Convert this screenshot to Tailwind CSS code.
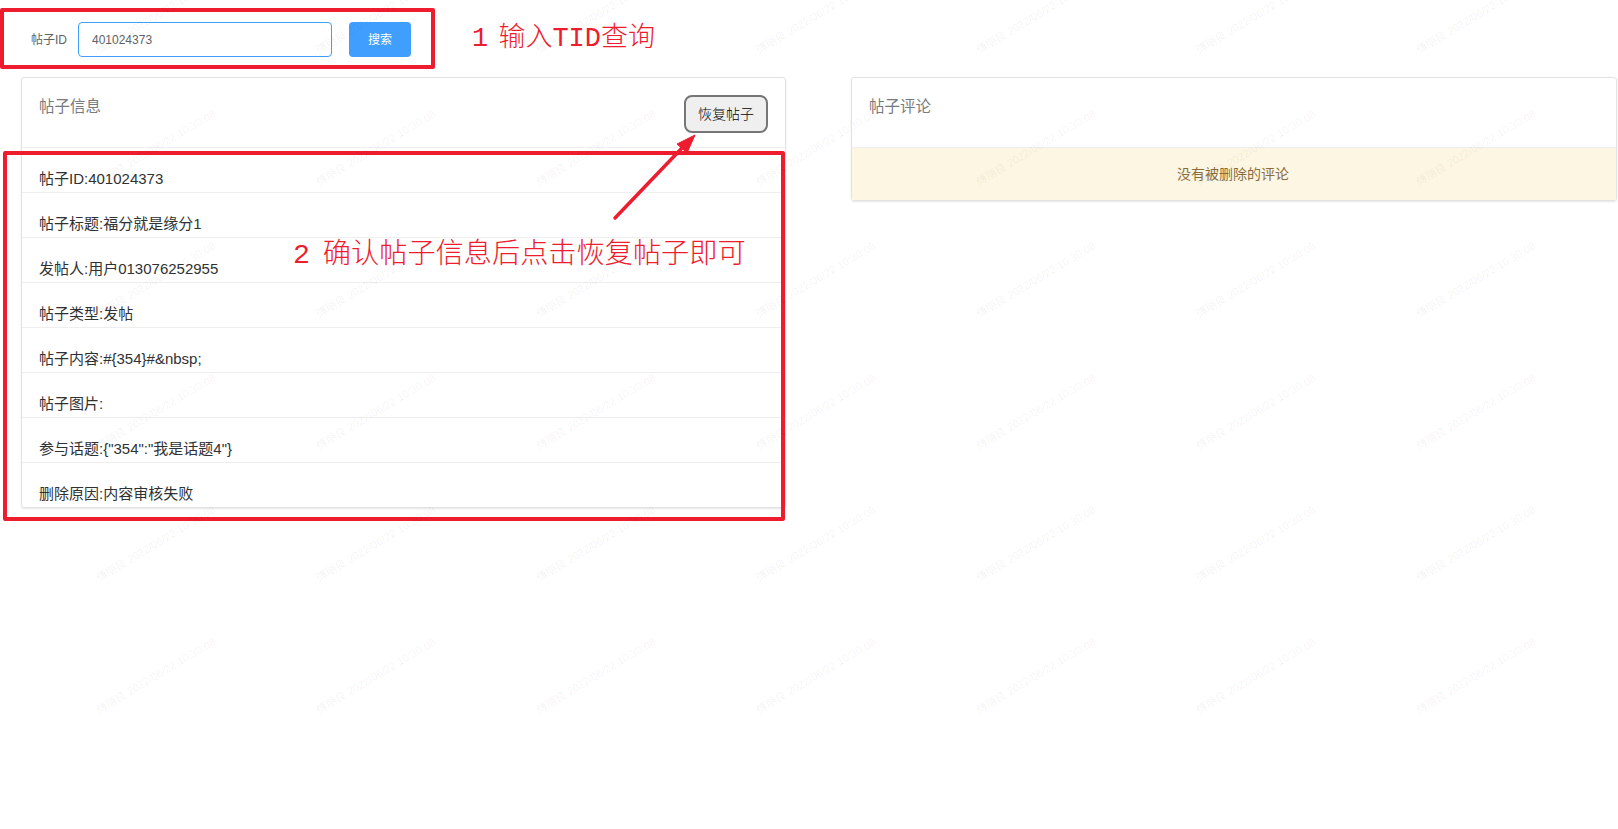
<!DOCTYPE html>
<html lang="zh-CN">
<head>
<meta charset="utf-8"/>
<title>帖子恢复</title>
<script src="https://cdn.jsdelivr.net/npm/@tailwindcss/browser@4"></script>
</head>
<body class="bg-white font-['Liberation_Sans','Noto_Sans_CJK_SC',sans-serif]">
<div class="relative h-[829px] overflow-hidden">
  <!-- top bar shadow -->
  <div class="h-0 shadow-[0_0_7px_rgba(0,0,0,0.3)]"></div>
  <div class="absolute top-0 left-[1330px] right-0 h-0 shadow-[0_1px_8px_rgba(0,0,0,0.55)]"></div>

  <!-- search form -->
  <div class="flex items-center pt-[22px] pl-[31px] h-[57px]">
    <label class="w-[47px] text-xs text-[#606266]">帖子ID</label>
    <input class="w-[254px] h-[35px] px-[13px] text-xs text-[#606266] border border-[#409eff] rounded outline-none" value="401024373"/>
    <button class="ml-[17px] w-[62px] h-[35px] bg-[#409eff] text-white text-xs rounded">搜索</button>
  </div>

  <div class="flex gap-[65px] pl-[21px] pr-px mt-[20px] items-start">
    <!-- post info -->
    <div class="w-[765px] border border-[#e3e3e3] rounded-[3px] shadow-[0_1px_2px_rgba(0,0,0,0.1)]">
      <div class="h-[70px] flex justify-between pl-[17px] pr-[17px] border-b border-[#eeeeee]">
        <div class="pt-[18px] text-[15.5px] leading-[22px] text-[#777b80]">帖子信息</div>
        <button class="mt-[17px] w-[84px] h-[38px] bg-[#efefef] border-2 border-[#767676] rounded-lg text-sm font-light text-black">恢复帖子</button>
      </div>
      <div class="h-[45px] pt-[21px] pl-[17px] text-[15px] leading-5 text-[#303133] border-b border-[#eeeeee]">帖子ID:401024373</div>
      <div class="h-[45px] pt-[21px] pl-[17px] text-[15px] leading-5 text-[#303133] border-b border-[#eeeeee]">帖子标题:福分就是缘分1</div>
      <div class="h-[45px] pt-[21px] pl-[17px] text-[15px] leading-5 text-[#303133] border-b border-[#eeeeee]">发帖人:用户013076252955</div>
      <div class="h-[45px] pt-[21px] pl-[17px] text-[15px] leading-5 text-[#303133] border-b border-[#eeeeee]">帖子类型:发帖</div>
      <div class="h-[45px] pt-[21px] pl-[17px] text-[15px] leading-5 text-[#303133] border-b border-[#eeeeee]">帖子内容:#{354}#&amp;nbsp;</div>
      <div class="h-[45px] pt-[21px] pl-[17px] text-[15px] leading-5 text-[#303133] border-b border-[#eeeeee]">帖子图片:</div>
      <div class="h-[45px] pt-[21px] pl-[17px] text-[15px] leading-5 text-[#303133] border-b border-[#eeeeee]">参与话题:{"354":"我是话题4"}</div>
      <div class="h-[44px] pt-[21px] pl-[17px] text-[15px] leading-5 text-[#303133]">删除原因:内容审核失败</div>
    </div>

    <!-- post comments -->
    <div class="flex-1 border border-[#e3e3e3] rounded-[3px] shadow-[0_1px_2px_rgba(0,0,0,0.1)]">
      <div class="h-[70px] pl-[17px] pt-[18px] text-[15.5px] leading-[22px] text-[#777b80] border-b border-[#eeeeee]">帖子评论</div>
      <div class="h-[52px] pr-[2px] pt-[16px] bg-[#fcf6e3] text-center text-sm leading-5 text-[#8a6d3b]">没有被删除的评论</div>
    </div>
  </div>

  <!-- red annotations -->
  <div class="absolute left-0 top-[8px] w-[435px] h-[61px] border-4 border-[#ed1c2e] rounded-[2px]"></div>
  <div class="absolute left-[3px] top-[151px] w-[782px] h-[370px] border-4 border-[#ed1c2e] rounded-[2px]"></div>
  <div class="absolute left-[472px] top-[20px] text-[27px] leading-[38px] [word-spacing:-6px] font-light whitespace-nowrap text-[#ed1c2e] font-['Liberation_Mono','Noto_Sans_CJK_SC',monospace]">1 输入TID查询</div>
  <div class="absolute left-[293px] top-[236px] text-[28.2px] leading-[40px] [word-spacing:-4px] font-light whitespace-nowrap text-[#ed1c2e] font-['Liberation_Mono','Noto_Sans_CJK_SC',monospace]">2 确认帖子信息后点击恢复帖子即可</div>
  <svg class="absolute left-[600px] top-[125px]" width="110" height="105" viewBox="600 125 110 105">
    <path d="M615 218 L682 148" fill="none" stroke="#ed1c2e" stroke-width="3.5" stroke-linecap="round"/>
    <path d="M695 135 L677 144 L687 153 Z" fill="#ed1c2e" stroke="#ed1c2e" stroke-linejoin="round"/>
  </svg>

  <!-- watermark -->
  <div id="watermark" class="absolute left-[100px] top-[-76px] grid grid-cols-[repeat(7,220px)] auto-rows-[132px] pointer-events-none"></div>
</div>
<script>
const wm = document.getElementById("watermark");
for (let i = 0; i < 42; i++) {
  wm.innerHTML += '<div class="flex items-end"><span class="origin-bottom-left rotate-[-31deg] whitespace-nowrap text-[11px] leading-none text-black/[0.06] font-[\'Open_Sans\',\'Noto_Sans_CJK_SC\',sans-serif]">傅朋良 2022/06/22 10:30:08</span></div>';
}
</script>
</body>
</html>
